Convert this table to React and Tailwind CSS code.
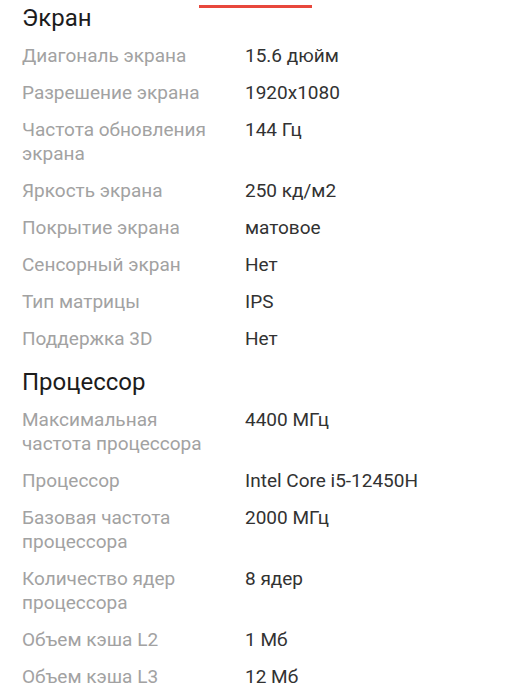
export default function App() {
  const sections = [
    {
      title: "Экран",
      rows: [
        ["Диагональ экрана", "15.6 дюйм"],
        ["Разрешение экрана", "1920x1080"],
        ["Частота обновления экрана", "144 Гц"],
        ["Яркость экрана", "250 кд/м2"],
        ["Покрытие экрана", "матовое"],
        ["Сенсорный экран", "Нет"],
        ["Тип матрицы", "IPS"],
        ["Поддержка 3D", "Нет"],
      ],
    },
    {
      title: "Процессор",
      rows: [
        ["Максимальная частота процессора", "4400 МГц"],
        ["Процессор", "Intel Core i5-12450H"],
        ["Базовая частота процессора", "2000 МГц"],
        ["Количество ядер процессора", "8 ядер"],
        ["Объем кэша L2", "1 Мб"],
        ["Объем кэша L3", "12 Мб"],
      ],
    },
  ];
  return (
    <div
      className="relative w-[511px] h-[700px] overflow-hidden bg-white pl-[22px] pt-[2px]"
      style={{ fontFamily: "Roboto, 'Noto Sans', sans-serif" }}
    >
      <div className="absolute left-[199px] top-[5px] w-[113px] h-[3px] bg-[#e8473c]" />
      <div className="flex flex-col gap-[15px]">
        {sections.map((s) => (
          <div key={s.title} className="flex flex-col">
            <div className="text-[24px] leading-[32px] text-[#1c1c1c]">{s.title}</div>
            <div className="mt-[10px] flex flex-col gap-[13px]">
              {s.rows.map(([k, v]) => (
                <div key={k} className="flex text-[19px] leading-[24px]">
                  <div className="w-[223px] shrink-0 pr-[28px] text-[#a2a2a2]">{k}</div>
                  <div className="text-[#323232]">{v}</div>
                </div>
              ))}
            </div>
          </div>
        ))}
      </div>
    </div>
  );
}
